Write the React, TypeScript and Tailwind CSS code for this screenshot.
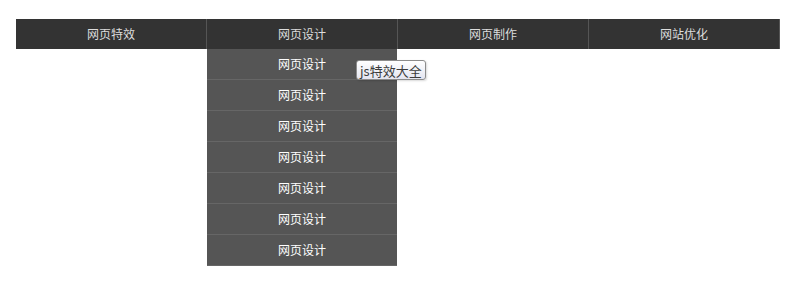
const items = ['网页特效', '网页设计', '网页制作', '网站优化']
const subItems = Array.from({ length: 7 }, () => '网页设计')

const font = { fontFamily: '"Noto Sans CJK SC", "Microsoft YaHei", sans-serif' }

export default function App() {
  return (
    <div className="relative h-[282px] w-[794px] bg-white pt-[19px] pl-4 text-xs" style={font}>
      <ul className="flex w-[764px] bg-[#333333]">
        {items.map((label, i) => (
          <li key={i} className="relative w-[191px] border-r border-[#555555]">
            <a className="block h-[30px] text-center leading-[30px] text-[#dddddd]">{label}</a>
            {i === 1 && (
              <ul className="absolute top-[30px] left-0 w-[190px] bg-[#555555]">
                {subItems.map((s, j) => (
                  <li key={j} className="h-[31px] border-b border-[#666666] text-center leading-[30px] text-white">
                    {s}
                  </li>
                ))}
              </ul>
            )}
          </li>
        ))}
      </ul>

      {/* native title tooltip */}
      <div className="absolute top-[60px] left-[356px] flex h-5 items-center rounded-[3px] border border-[#8c8c8c] bg-gradient-to-b from-white to-[#e4e5f0] px-[3px] text-[13px] leading-none text-[#3c3c3c] shadow-[1px_1px_2px_rgba(0,0,0,0.15)]">
        js特效大全
      </div>
    </div>
  )
}
